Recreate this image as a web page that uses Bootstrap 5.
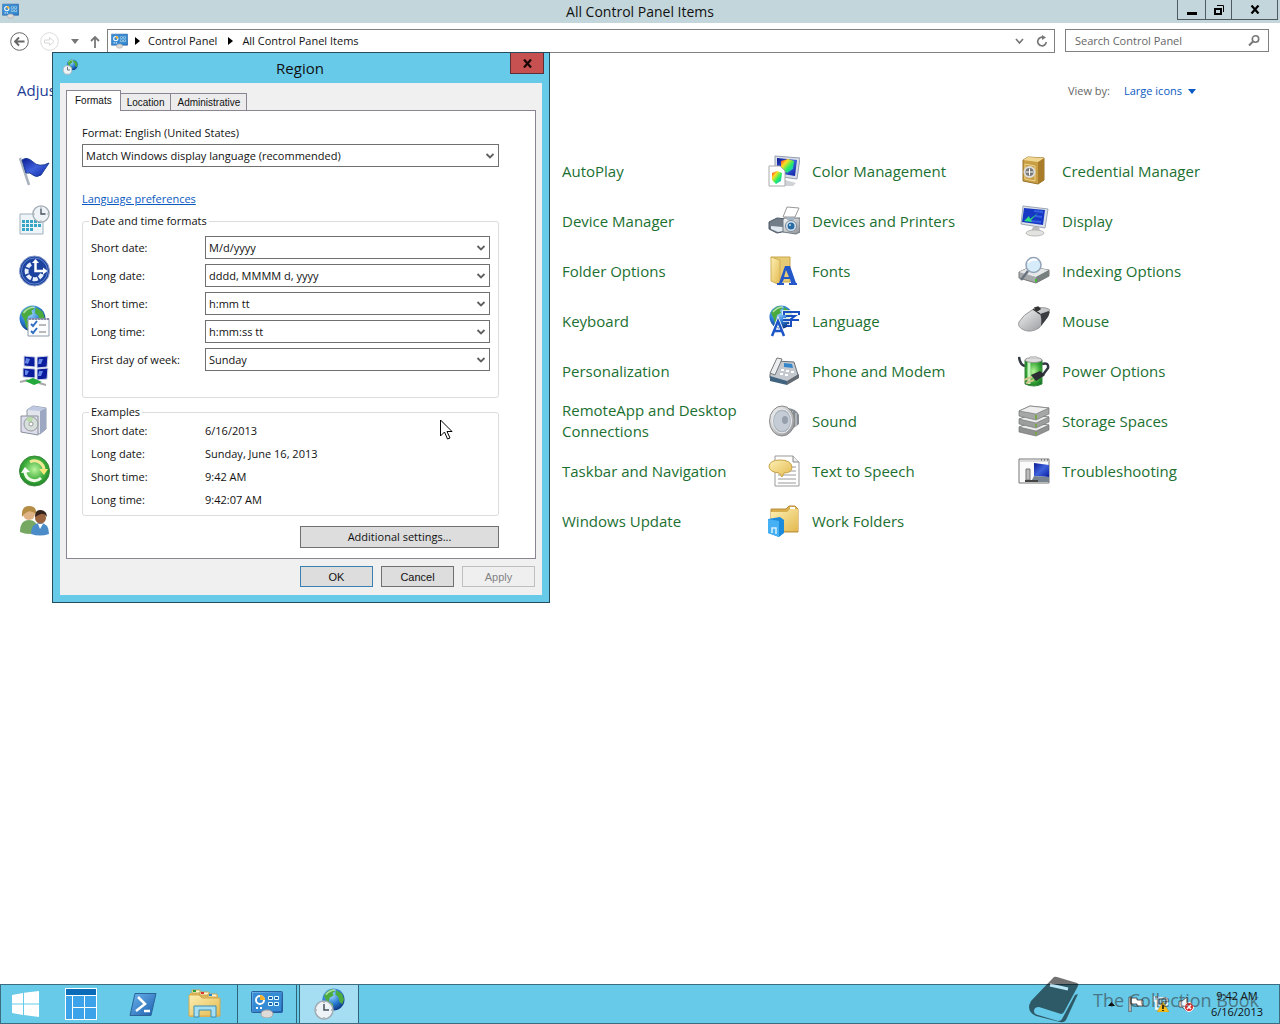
<!DOCTYPE html>
<html lang="en">
<head>
<meta charset="utf-8">
<meta name="viewport" content="width=device-width, initial-scale=1">
<title>All Control Panel Items</title>
<link href="https://cdn.jsdelivr.net/npm/bootstrap@5.3.0/dist/css/bootstrap.min.css" rel="stylesheet">
<style>
:root{--glass:#67cae9;--edge:#244c5c}
body{font-family:"Open Sans","Noto Sans",sans-serif;font-size:11px;line-height:16px;color:#111;background:#fff}
svg{flex:none;display:block}
button{font-family:inherit;color:inherit}
.titlebar{height:23px;background:#c3d6dc}
.titlebar h1{font-size:14px;line-height:23px}
.title-icon{left:2px;top:3px}
.winctl{top:0;right:2px;height:20px;border:1px solid #4d5a60;border-top:0}
.winctl button{background:none;border:0;padding:0;width:27px;display:grid;place-items:center}
.winctl button+button{border-left:1px solid #4d5a60;width:26px}
.winctl button:last-child{width:46px}
.navrow{padding:6px 11px 0 10px;gap:10px}
.navrow .plain{background:none;border:0;padding:0}
.histbtns{width:90px;height:24px;margin-right:-3px}
.address{height:24px;border:1px solid #808080;padding:0 6px 0 3px}
.address a,.address a:hover{color:#111}
.crumb-arrow{margin:0 8px 0 7px}
.crumb-arrow.next{margin:0 9px 0 11px}
.searchbox{width:204px;height:23px;border:1px solid #808080}
.searchbox input{font-size:11px;line-height:16px;padding:0 0 0 9px;color:#555}
.searchbox input::placeholder{color:#666;opacity:1}
.headrow{padding:27px 84px 0 17px;height:93px}
.headrow h2{font-size:15px;line-height:20px;color:#1d3c94}
.viewby{gap:14px;line-height:22px;color:#666}
.viewby button{color:#0a5ac2;gap:6px}
.items{grid-template-columns:repeat(auto-fill,250px);grid-auto-rows:50px;padding-left:18px}
.items li:nth-child(4n+2){grid-column:3}
.items a{font-size:15px;line-height:21px;color:#1c7032;gap:12px;height:50px;padding-right:20px}
.items .bare{padding-left:44px}
/* Region dialog */
.dlg{left:52px;top:52px;width:498px;background:var(--glass);border:1px solid var(--edge);padding:0 7px 7px}
.dlg-title{height:30px;padding-right:2px}
.dlg-title h2{font-size:15px;line-height:30px}
.dlg-icon{left:9px;top:6px}
.dlg-close{top:0;right:5px;width:34px;height:21px;background:#c75050;border:1px solid #5a3036;border-top:0;padding:0;display:grid;place-items:center}
.dlg-body{background:#f0f0f0;padding:7px 6px 8px}
.tabs .nav-link{font-family:"Liberation Sans",sans-serif;font-size:10px;line-height:17px;color:#111;background:#ececec;border:1px solid #8b8593;border-radius:0;border-bottom:0;padding:0 6px;height:17px;margin:0 0 0 -1px}
.tabs .nav-link.active{background:#fff;height:21px;line-height:18px;padding:0 8px;margin:0 0 -1px;z-index:2;position:relative}
.pane{background:#fff;border:1px solid #8b8593;padding:14px 36px 10px 15px}
.pane>label{margin-bottom:3px}
.pane>a{color:#0a5ac2}
.combo{--bs-form-select-bg-img:url("data:image/svg+xml,%3Csvg xmlns='http://www.w3.org/2000/svg' viewBox='0 0 10 8'%3E%3Cpath d='M1.500 2l3.500 3.500 3.500-3.500' fill='none' stroke='%23606060' stroke-width='1.800'/%3E%3C/svg%3E");font-size:11px;line-height:16px;height:23px;border:1px solid #707070;border-radius:0;padding:0 20px 0 3px;color:#111;background-color:#fff;background-size:10px 8px;background-position:right 3px center}
.group{border:1px solid #dcdcdc;border-radius:3px;padding:0 8px 4px;margin-top:7px}
.group legend{font-size:11px;line-height:14px;padding:0 2px;margin:0 0 0 -2px}
.pair{display:grid;grid-template-columns:114px 1fr;align-items:center}
.formats{padding-bottom:26px}
.formats .pair{margin-top:5px}
.formats legend+.pair{margin-top:8px}
.samples .pair{height:23px}
.wbtn{font-size:11px;line-height:14px;border:1px solid #707070;border-radius:0;background:#ddd;color:#111;padding:0;height:22px}
.wbtn.wide{width:199px;margin-top:10px}
.wbtn.ms{font-family:"Liberation Sans",sans-serif;width:73px;height:21px}
.wbtn.default{border-color:#3c7fb1}
.wbtn:disabled{background:#efefef;border-color:#bfbfbf;color:#838383;opacity:1}
.actions{margin-top:7px;padding-right:1px}
.pointer{left:440px;top:419px}
/* Taskbar */
.taskbar{height:40px;background:var(--glass);border:1px solid #3b6c7f;gap:2px}
.taskbar .tb{width:60px;height:38px;border:0;background:none;padding:0;display:grid;place-items:center}
.taskbar .start{width:48px}
.taskbar .run{border:solid #2f6478;border-width:0 1px;background:#70cdea}
.taskbar .on{background:#a5ddf3}
.tray{gap:9px;padding-right:16px}
.brand{right:21px;bottom:1px;font-size:18px;line-height:24px;color:#333;opacity:.55;gap:14px}
</style>
<script src="https://cdn.jsdelivr.net/npm/bootstrap@5.3.0/dist/js/bootstrap.bundle.min.js"></script>
</head>
<body class="d-flex flex-column min-vh-100 position-relative">
<svg width="0" height="0" class="position-absolute" aria-hidden="true">
<defs>
<linearGradient id="blu" x1="0" y1="0" x2="1" y2="1"><stop offset="0" stop-color="#6db4ec"/><stop offset="1" stop-color="#1b5fae"/></linearGradient>
<linearGradient id="navy" x1="0" y1="0" x2="1" y2="1"><stop offset="0" stop-color="#0a1a90"/><stop offset=".5" stop-color="#3f62dc"/><stop offset="1" stop-color="#0a1fa0"/></linearGradient>
<linearGradient id="gry" x1="0" y1="0" x2="1" y2="1"><stop offset="0" stop-color="#fafafa"/><stop offset="1" stop-color="#8a8d92"/></linearGradient>
<linearGradient id="yel" x1="0" y1="0" x2="1" y2="1"><stop offset="0" stop-color="#fdf0b4"/><stop offset="1" stop-color="#e3b94f"/></linearGradient>
<linearGradient id="rgb" x1="0" y1="0" x2="1" y2="1"><stop offset="0" stop-color="#f22"/><stop offset=".3" stop-color="#fd2"/><stop offset=".6" stop-color="#2e6"/><stop offset="1" stop-color="#29f"/></linearGradient>
<radialGradient id="sea" cx=".4" cy=".3" r=".8"><stop offset="0" stop-color="#a6dcff"/><stop offset=".5" stop-color="#2b7ed6"/><stop offset="1" stop-color="#06256e"/></radialGradient>
<radialGradient id="grn" cx=".5" cy=".45" r=".6"><stop offset="0" stop-color="#baf59c"/><stop offset=".6" stop-color="#3fae3c"/><stop offset="1" stop-color="#167a24"/></radialGradient>
<symbol id="globe" viewBox="0 0 24 24"><circle cx="12" cy="12" r="11.500" fill="url(#sea)"/><path d="M2 8Q5 2 11 1l3 2-3 2 1 3-4 2-1 4 4 2 1 3-3 4-3-4-1-5zM15 2l6 4 2 6-2 5-3-3-1-5-3-2z" fill="#4cab3e"/><path d="M4 7Q8 2 14 2" stroke="#d8f5d0" stroke-width="1.500" fill="none" opacity=".7"/></symbol>
<symbol id="clock" viewBox="0 0 20 20"><circle cx="10" cy="10" r="9" fill="#eef3f7" stroke="#a2acb4" stroke-width="1.500"/><path d="M10 4v6h5" stroke="#47515c" stroke-width="1.500" fill="none"/><path d="M10 2v1M10 17v1M2 10h1M17 10h1" stroke="#888"/></symbol>
<symbol id="region" viewBox="0 0 32 32"><use href="#globe" x="9" y="0" width="23" height="23"/><use href="#clock" x="1" y="12" width="20" height="20"/></symbol>
<symbol id="cpl" viewBox="0 0 32 27"><rect x=".5" y=".5" width="31" height="21" rx="1" fill="url(#blu)" stroke="#285f9c"/><rect x="2" y="2" width="28" height="18" fill="#358bd4"/><circle cx="9" cy="9" r="4" fill="none" stroke="#fff" stroke-width="2"/><path d="M9 9V4a5 5 0 0 1 5 5z" fill="#f6b12c"/><path d="M17.500 5.500h4v3h-4zM23.500 5.500h4v3h-4zM17.500 11.500h4v3h-4zM23.500 11.500h4v3h-4z" fill="#1d5ea8" stroke="#dff"/><path d="M5 17h2M9 17h2" stroke="#fff" stroke-width="2"/><ellipse cx="16" cy="23" rx="6" ry="4" fill="#dedad8" stroke="#a8a4a4"/></symbol>
</defs></svg>

<header class="titlebar position-relative text-center">
  <svg class="title-icon position-absolute" width="17" height="16"><use href="#cpl"/></svg>
  <h1 class="m-0 fw-normal">All Control Panel Items</h1>
  <div class="winctl position-absolute d-flex">
    <button aria-label="Minimize"><svg width="10" height="10"><path d="M0 7h10v3H0z"/></svg></button>
    <button aria-label="Restore"><svg width="10" height="10"><path d="M1 4h6v5H1z" fill="none" stroke="#000" stroke-width="2"/><path d="M3 .5h6.500V7" fill="none" stroke="#000"/></svg></button>
    <button aria-label="Close"><svg width="10" height="9"><path d="M1.500.500l7 8M8.500.500l-7 8" stroke="#000" stroke-width="2.200"/></svg></button>
  </div>
</header>

<nav class="navrow d-flex align-items-start" aria-label="Address">
  <div class="histbtns d-flex align-items-center">
    <button class="plain" aria-label="Back"><svg width="19" height="19"><circle cx="9.500" cy="9.500" r="8.800" fill="none" stroke="#666"/><path d="M14.500 9.500H5.500M9 5.500l-4 4 4 4" fill="none" stroke="#666" stroke-width="1.800"/></svg></button>
    <button class="plain ms-auto" aria-label="Forward"><svg width="19" height="19"><circle cx="9.500" cy="9.500" r="8.800" fill="none" stroke="#dcdcdc"/><path d="M4.500 8h5V5.500l4.500 4-4.500 4V11h-5z" fill="none" stroke="#d8d8d8"/></svg></button>
    <button class="plain ms-auto" aria-label="Recent locations"><svg width="8" height="5"><path d="M0 0h8L4 5z" fill="#777"/></svg></button>
    <button class="plain ms-auto" aria-label="Up"><svg width="10" height="13"><path d="M5 13V2M1 6l4-4 4 4" fill="none" stroke="#777" stroke-width="1.800"/></svg></button>
  </div>
  <div class="address d-flex align-items-center flex-grow-1">
    <svg width="17" height="16"><use href="#cpl"/></svg>
    <svg class="crumb-arrow" width="5" height="8"><path d="M0 0l5 4-5 4z"/></svg>
    <a class="text-decoration-none" href="#">Control Panel</a>
    <svg class="crumb-arrow next" width="5" height="8"><path d="M0 0l5 4-5 4z"/></svg>
    <a class="text-decoration-none" href="#">All Control Panel Items</a>
    <button class="plain ms-auto me-2" aria-label="Previous locations"><svg width="9" height="7"><path d="M1 1l3.500 4L8 1" fill="none" stroke="#777" stroke-width="1.700"/></svg></button>
    <button class="plain ms-1" aria-label="Refresh"><svg width="12" height="12"><path d="M7.500 2.500A4.300 4.300 0 1 0 10.300 7" fill="none" stroke="#777" stroke-width="1.700"/><path d="M6 0l4 2.500L6 5z" fill="#777"/></svg></button>
  </div>
  <label class="searchbox d-flex align-items-center pe-2">
    <input class="form-control border-0 shadow-none bg-transparent" type="search" placeholder="Search Control Panel" aria-label="Search Control Panel">
    <svg width="12" height="11"><circle cx="7.500" cy="4" r="3.200" fill="none" stroke="#777" stroke-width="1.600"/><path d="M5 6.500L1 10.500" stroke="#777" stroke-width="2"/></svg>
  </label>
</nav>

<main class="flex-grow-1">
  <div class="headrow d-flex justify-content-between">
    <h2 class="m-0 fw-normal">Adjust</h2>
    <div class="viewby d-flex align-items-start"><span>View by:</span>
      <button class="border-0 bg-transparent p-0 d-flex align-items-center">Large icons<svg width="8" height="5"><path d="M0 0h8L4 5z" fill="#0a5ac2"/></svg></button></div>
  </div>
  <ul class="items d-grid list-unstyled m-0">
    <li><a href="#" aria-label="Action Center" class="d-flex align-items-center text-decoration-none"><svg width="32" height="32"><path d="M2 3l9 27" stroke="#a9b2bd" stroke-width="2.500"/><path d="M4 5Q9 1 15 7t16 1l-4 6-4 6q-5 3-8 0T8 18z" fill="url(#navy)" stroke="#1c3d96"/></svg></a></li>
    <li><a href="#" class="bare d-flex align-items-center text-decoration-none">AutoPlay</a></li>
    <li><a href="#" class="d-flex align-items-center text-decoration-none"><svg width="32" height="32"><path d="M7 1l25 2-3 21-22-3z" fill="#d9dee6" stroke="#959eaf"/><path d="M9 3l20 2-2 16-18-3z" fill="url(#navy)"/><path d="M13 6l7-2 6 2-1 8-6 4-6-4z" fill="url(#rgb)"/><path d="M17 25l11 3-3 3H13z" fill="#cfd2d6"/><path d="M1 11h11l5 5v15H1z" fill="#fff" stroke="#aaa"/><path d="M4 18l5-2 5 2-1 8-5 3-4-4z" fill="url(#rgb)"/></svg>Color Management</a></li>
    <li><a href="#" class="d-flex align-items-center text-decoration-none"><svg width="32" height="32"><path d="M5 5l5-3 16 1v22l-6 4-15-3z" fill="#c99f45" stroke="#98742d"/><path d="M20 7l6-4v22l-6 4z" fill="#a87c28"/><path d="M5 5l5-3 16 1-6 4z" fill="#f0d791"/><path d="M7 9l10 2v15L7 24z" fill="none" stroke="#ecd28b"/><circle cx="11.500" cy="17" r="5" fill="#777" stroke="#ddd" stroke-width="2"/><path d="M8 17h7M11.500 13.500v7" stroke="#fff"/></svg>Credential Manager</a></li>

    <li><a href="#" aria-label="Date and Time" class="d-flex align-items-center text-decoration-none"><svg width="32" height="32"><path d="M2 9h23v20H2z" fill="#eef4f7" stroke="#9eb1bd"/><path d="M4 15h3v3H4zM8 15h3v3H8zM12 15h3v3h-3zM16 15h3v3h-3zM20 15h3v3h-3zM4 19h3v3H4zM8 19h3v3H8zM12 19h3v3h-3zM16 19h3v3h-3zM20 19h3v3h-3zM4 23h3v3H4zM8 23h3v3H8zM12 23h3v3h-3z" fill="#37a5c4"/><use href="#clock" x="14" y="0" width="18" height="18"/></svg></a></li>
    <li><a href="#" class="bare d-flex align-items-center text-decoration-none">Device Manager</a></li>
    <li><a href="#" class="d-flex align-items-center text-decoration-none"><svg width="32" height="32"><path d="M19 2l12 1-4 9H15z" fill="#fff" stroke="#999"/><path d="M1 17l8-4 10 1v12l-10 2-8-4z" fill="#737d88" stroke="#4c5865"/><path d="M3 21l12 1v4l-5 1-7-3z" fill="#e2e9f0"/><path d="M16 13h16v14l-4 2-13-2V15z" fill="url(#gry)" stroke="#6e7884"/><path d="M19 12h7v3h-7z" fill="#a4b2c1"/><circle cx="23" cy="21" r="5.500" fill="#dce6ee" stroke="#78899a"/><circle cx="23" cy="21" r="3.500" fill="#276ca5"/><circle cx="22" cy="20" r="1" fill="#bde"/></svg>Devices and Printers</a></li>
    <li><a href="#" class="d-flex align-items-center text-decoration-none"><svg width="32" height="32"><path d="M5 1l25 3-3 19-24-4z" fill="#dde2e8" stroke="#9ca7b5"/><path d="M6 3l21 2-2 15L4 17z" fill="#1638c4"/><path d="M16 6l9 1M17 11l7 1M13 16l10 1" stroke="#3560e0" stroke-width="2"/><path d="M20 8l-8 6-1-3-5 5 8 1-1-2z" fill="#2de07c"/><path d="M15 22h6l1 4h-9z" fill="#bbb"/><ellipse cx="17" cy="28" rx="9" ry="3" fill="#e2e2df" stroke="#bbb"/></svg>Display</a></li>

    <li><a href="#" aria-label="Ease of Access Center" class="d-flex align-items-center text-decoration-none"><svg width="32" height="32"><circle cx="16.500" cy="16" r="15" fill="#1c429f" stroke="#8c9fc8"/><circle cx="16.500" cy="16" r="13" fill="none" stroke="#7f9fe0" opacity=".7"/><path d="M13 9a8 8 0 1 0 11 10" fill="none" stroke="#e8f0fb" stroke-width="4" stroke-dasharray="5 1.500"/><path d="M17.500 7v9H27" stroke="#fff" stroke-width="2.500" fill="none"/><path d="M14 8l3.500-4L21 8zM25 12.500l4.500 3.500-4.500 3.500z" fill="#fff"/></svg></a></li>
    <li><a href="#" class="bare d-flex align-items-center text-decoration-none">Folder Options</a></li>
    <li><a href="#" class="d-flex align-items-center text-decoration-none"><svg width="32" height="32"><path d="M3 2h19v25H9z" fill="#e8cb75" stroke="#c9a64c"/><path d="M3 2l9 3v25l-9-4z" fill="url(#yel)" stroke="#cfae58"/><path fill-rule="evenodd" d="M17 11h5l6 17h1v2h-8v-2h2l-1-4h-6l-2 4h2v2h-7v-2h2zM18 15l-2 7h5z" fill="#2458c8"/></svg>Fonts</a></li>
    <li><a href="#" class="d-flex align-items-center text-decoration-none"><svg width="32" height="32"><path d="M1 17l11-5 19 3v6l-13 7-17-5z" fill="#a6a9ab" stroke="#777"/><path d="M1 17l11-5 19 3-13 7z" fill="#e5e7e8"/><path d="M18 22l13-7v6l-13 7z" fill="#77807e"/><path d="M17 24h2v3h-2z" fill="#4b3"/><circle cx="15.500" cy="10" r="7.500" fill="#d7ecfa" stroke="#92a3b5" stroke-width="1.500"/><path d="M10 16l-7 9" stroke="#69737e" stroke-width="2.500"/><path d="M10 8q3-5 9-3" stroke="#fff" stroke-width="2" fill="none"/></svg>Indexing Options</a></li>

    <li><a href="#" aria-label="Internet Options" class="d-flex align-items-center text-decoration-none"><svg width="32" height="32"><use href="#globe" x="1" y="0" width="27" height="27"/><path d="M10 14h21v17H10z" fill="#fcfdff" stroke="#8c9aaa"/><path d="M11 14h20" stroke="#88a" stroke-dasharray="2 1" stroke-width="2"/><path d="M13 19l2 2 4-5M13 26l2 2 4-5" stroke="#2e6fc2" stroke-width="2" fill="none"/><path d="M21 20h7M21 27h7" stroke="#777"/></svg></a></li>
    <li><a href="#" class="bare d-flex align-items-center text-decoration-none">Keyboard</a></li>
    <li><a href="#" class="d-flex align-items-center text-decoration-none"><svg width="32" height="32"><use href="#globe" x="1" y="0" width="24" height="24"/><path d="M4 31l6-15 6 15M6 26h8" fill="none" stroke="#fff" stroke-width="4"/><path d="M4 31l6-15 6 15M6 26h8" fill="none" stroke="#1c55c8" stroke-width="2.500"/><path d="M16 10V7h15v3M18 11h9l-4 3v7h-4M15 15h16" stroke="#fff" stroke-width="3.500" fill="none"/><path d="M16 10V7h15v3M18 11h9l-4 3v7h-4M15 15h16" stroke="#1a4fc0" stroke-width="2" fill="none"/></svg>Language</a></li>
    <li><a href="#" class="d-flex align-items-center text-decoration-none"><svg width="32" height="32"><path d="M14 5Q21 1 28 3t3 5q-3 7-10 15-8 5-15 2T1 17Q5 10 14 5z" fill="url(#gry)" stroke="#999"/><path d="M22 9l9-3q1 2-1 6l-7 9q1-8-1-12z" fill="#3c3d42"/><path d="M15 4l7 5M17 3l3-1 2 2-3 2z" stroke="#333" stroke-width="1.500" fill="#333"/></svg>Mouse</a></li>

    <li><a href="#" aria-label="Network and Sharing Center" class="d-flex align-items-center text-decoration-none"><svg width="32" height="32"><path d="M6 1l11 1v10L6 11zM19 2l11-1-1 11-10 1zM5 13l12 1v9L5 22zM19 14l11-1-1 11-10 1z" fill="#0b1d9c" stroke="#cfd6e8"/><path d="M8 3l4 1-2 5-3-1zM21 4h4l-2 5h-3zM7 15l4 1-2 4H7zM21 16h4l-2 5h-3z" fill="#6689e8"/><path d="M2 27l8-2M21 28l7 2" stroke="#aaa" stroke-width="2"/><path d="M7 26l8-3 9 4-8 3z" fill="#23a83c"/></svg></a></li>
    <li><a href="#" class="bare d-flex align-items-center text-decoration-none">Personalization</a></li>
    <li><a href="#" class="d-flex align-items-center text-decoration-none"><svg width="32" height="32"><path d="M2 19L9 6l17 1 4 13-11 7-17-4z" fill="#c4c9cf" stroke="#666f78"/><path d="M9 3l5 1-7 16-5-2z" fill="#eceff2" stroke="#777"/><path d="M16 8l8 1 1 4-9-1z" fill="#3585cb"/><path d="M13 15h3M18 16h3M23 17h3M12 19h3M17 20h3" stroke="#fff" stroke-width="2"/><path d="M2 21l17 5v4L2 26z" fill="#40647f"/><path d="M19 26l12-7v4l-12 7z" fill="#646b72"/></svg>Phone and Modem</a></li>
    <li><a href="#" class="d-flex align-items-center text-decoration-none"><svg width="32" height="32"><path d="M1 2q1 9 7 9M24 9q7-2 6 4l-6 8" stroke="#333943" stroke-width="2.500" fill="none"/><path d="M7 5h17v24q-8 4-17 0z" fill="url(#grn)" stroke="#3d8b40"/><path d="M11 7v22" stroke="#c5f5bd" stroke-width="3"/><ellipse cx="15.500" cy="5" rx="8.500" ry="2.500" fill="#ddd" stroke="#999"/><path d="M12 1h7v3h-7z" fill="#ccc"/><path d="M13 20l9-4 5 4-9 6z" fill="#2c2e34"/><path d="M14 22l-8 3M16 25l-8 3" stroke="#d7c38e" stroke-width="2"/></svg>Power Options</a></li>

    <li><a href="#" aria-label="Programs and Features" class="d-flex align-items-center text-decoration-none"><svg width="32" height="32"><path d="M9 5l6-4 13 2v21l-6 5-13-3z" fill="#e2e5ec" stroke="#8f98a8"/><path d="M22 6l6-3v21l-6 5z" fill="#9ca7c1"/><path d="M9 5l6-4 13 2-6 3z" fill="#bec8e0"/><path d="M3 11h17v19L3 27z" fill="#dde" stroke="#888f99"/><circle cx="13" cy="19" r="7" fill="#d6dfdb" stroke="#999"/><path d="M13 19l-5-5q4-4 7-1z" fill="#b7dba7"/><circle cx="13" cy="19" r="2" fill="#fff" stroke="#999"/></svg></a></li>
    <li><a href="#" class="bare d-flex align-items-center text-decoration-none">RemoteApp and Desktop Connections</a></li>
    <li><a href="#" class="d-flex align-items-center text-decoration-none"><svg width="32" height="32"><path d="M18 3q10 0 13 7v9l-12 9z" fill="#858b92"/><path d="M24 6l1 19M28 8v14" stroke="#ddd"/><ellipse cx="14" cy="16" rx="12.500" ry="15" fill="url(#gry)" stroke="#888"/><ellipse cx="14" cy="16" rx="9.500" ry="12" fill="#aeb6c0" stroke="#eee"/><ellipse cx="14" cy="16" rx="8" ry="10" fill="#c5ccd5"/><ellipse cx="17" cy="15" rx="3" ry="4" fill="#959fac"/></svg>Sound</a></li>
    <li><a href="#" class="d-flex align-items-center text-decoration-none"><svg width="32" height="32"><g stroke="#777" stroke-width=".7"><path d="M1 22l11-4 19 2v5l-13 6-17-4z" fill="#8f9291"/><path d="M1 22l11-4 19 2-13 6z" fill="#eee"/><path d="M1 14l11-4 19 2v5l-13 6-17-4z" fill="#9b9e9d"/><path d="M1 14l11-4 19 2-13 6z" fill="#eee"/><path d="M1 6l11-5 19 2v6l-13 6-17-4z" fill="#a4a7a6"/><path d="M1 6l11-5 19 2-13 6z" fill="#eee"/></g><path d="M17 10h2v4h-2zM17 19h2v3h-2zM17 27h2v3h-2z" fill="#7a4"/></svg>Storage Spaces</a></li>

    <li><a href="#" aria-label="Sync Center" class="d-flex align-items-center text-decoration-none"><svg width="32" height="32"><circle cx="16.500" cy="16" r="15" fill="url(#grn)" stroke="#3c8a3c"/><path d="M7 17a9.500 9.500 0 0 0 16 6" stroke="#f2fae9" stroke-width="3" fill="none"/><path d="M3 18l4-6 5 5z" fill="#fff"/><path d="M26 15A9.500 9.500 0 0 0 12 7" stroke="#f1e896" stroke-width="3" fill="none"/><path d="M21 14h9l-4 6z" fill="#f7e87c"/></svg></a></li>
    <li><a href="#" class="bare d-flex align-items-center text-decoration-none">Taskbar and Navigation</a></li>
    <li><a href="#" class="d-flex align-items-center text-decoration-none"><svg width="32" height="32"><path d="M7 1h18l6 6v24H7z" fill="#fff" stroke="#999"/><path d="M25 1v6h6" fill="#eee" stroke="#888"/><path d="M17 16h11M10 20h18M10 24h18M10 28h18M24 12h4" stroke="#999"/><path d="M12 5q11 0 12 7 0 6-8 6l-2 4-3-4Q1 17 1 11q1-6 11-6z" fill="url(#yel)" stroke="#c7a144"/></svg>Text to Speech</a></li>
    <li><a href="#" class="d-flex align-items-center text-decoration-none"><svg width="32" height="32"><path d="M1 4h30v24H1z" fill="#fafafa" stroke="#777"/><path d="M1 6h30" stroke="#bbb"/><path d="M23 5h1M26 5h1M29 5h1" stroke="#444"/><path d="M16 8l15 2v12l-15-1z" fill="url(#navy)"/><path d="M8 14h4v11H8z" fill="#bbb" stroke="#777"/><path d="M16 21l15 1v5H13z" fill="#788390"/><path d="M7 26h13" stroke="#444" stroke-width="2"/></svg>Troubleshooting</a></li>

    <li><a href="#" aria-label="User Accounts" class="d-flex align-items-center text-decoration-none"><svg width="32" height="32"><path d="M2 27q0-12 9-12t9 12q-9 4-18 0z" fill="#76a864"/><circle cx="11" cy="9" r="6" fill="#e0b384"/><path d="M4 12q-1-11 7-11t7 8q-5-4-9-2t-5 5z" fill="#b58d45"/><path d="M13 29q0-11 9-11t9 11q-9 3-18 0z" fill="#4b8cc8"/><circle cx="22.500" cy="13" r="5.500" fill="#9a6440"/><path d="M17 12q0-8 6-7t6 7q-3-4-6-3t-6 3z" fill="#33231c"/><path d="M20 19l2 5 3-5z" fill="#fff"/></svg></a></li>
    <li><a href="#" class="bare d-flex align-items-center text-decoration-none">Windows Update</a></li>
    <li><a href="#" class="d-flex align-items-center text-decoration-none"><svg width="32" height="32"><path d="M3 4h15l3-3h6l3 3v23H3z" fill="#d8ae4e" stroke="#b98e36"/><path d="M3 7h16l3-3h8v22H3z" fill="url(#yel)"/><path d="M22 2h5v2h-5z" fill="#fff"/><path d="M0 14l12-2 4 3v13l-5 4-11-4z" fill="#1d8bdc"/><path d="M0 14l11 2v16L0 28z" fill="#45b0f4"/><path d="M4 28v-5h4v6" fill="none" stroke="#d6f0ff" stroke-width="1.500"/></svg>Work Folders</a></li>
  </ul>
</main>

<footer class="taskbar d-flex">
  <button class="tb start" aria-label="Start"><svg width="27" height="26"><path d="M0 4l11-2v10.500H0zM12 1.800L27 0v12.500H12zM0 13.500h11V24L0 22zM12 13.500h15V26l-15-2z" fill="#fff"/></svg></button>
  <button class="tb" aria-label="Server Manager"><svg width="32" height="32"><path d="M0 0h32v32H0z" fill="#fff"/><path d="M1 1h30v6H1z" fill="#0a6cb8"/><path d="M1 8h6v23H1zM8 8h11v11H8zM20 8h11v11H20zM8 20h11v11H8zM20 20h11v11H20z" fill="#3ca2ea"/></svg></button>
  <button class="tb" aria-label="PowerShell"><svg width="28" height="23"><path d="M6 .500h21L22 22.500H1z" fill="url(#blu)" stroke="#2a6499"/><path d="M9 4l7 7-9 7M15 18h6" fill="none" stroke="#fff" stroke-width="2.500"/></svg></button>
  <button class="tb" aria-label="File Explorer"><svg width="34" height="30"><path d="M2 4h10l2 2h16v22H2z" fill="#e0b85a"/><path d="M4 1h8v3H4zM12 3h9v3h-9zM20 5h9v3h-9z" fill="#fff7d2" stroke="#c9a552"/><path d="M5 1h3v2H5z" fill="#2a9d35"/><path d="M13 3h3v2h-3z" fill="#d33"/><path d="M21 5h3v2h-3z" fill="#28c"/><path d="M1 6h10l3 3h18v18H1z" fill="url(#yel)" stroke="#d2aa50"/><path d="M6 28V17h22v11h-5v-7H11v7z" fill="#a6dff3" stroke="#3a8fb5"/></svg></button>
  <button class="tb run" aria-label="Control Panel"><svg width="32" height="27"><use href="#cpl"/></svg></button>
  <button class="tb run on" aria-label="Region"><svg width="32" height="32"><use href="#region"/></svg></button>
  <div class="tray ms-auto d-flex align-items-center">
    <button class="border-0 bg-transparent p-0 me-1" aria-label="Show hidden icons"><svg width="7" height="4"><path d="M3.500 0L7 4H0z"/></svg></button>
    <svg width="16" height="16"><path d="M1 1h2v15H1zM3 2h6v2h6v6H9V8H3z" fill="#fff" stroke="#333" stroke-width=".8"/></svg>
    <svg width="16" height="16"><path d="M1 1h4v4H1zM5 2h9v7H5zM3 5v8h4" fill="#8bd5ee" stroke="#fff" stroke-width="1.500"/><path d="M2 1h3M6 3h7v5H6z" fill="none" stroke="#234"/><path d="M10 6l6 10H4z" fill="#fcbf1c" stroke="#c98d00" stroke-width=".5"/><path d="M10 9v4M10 14v1" stroke="#000" stroke-width="1.500"/></svg>
    <svg width="16" height="16"><path d="M1 5h3l5-4v14l-5-4H1z" fill="#eef8fc" stroke="#333" stroke-width=".8"/><circle cx="11" cy="11" r="4.500" fill="#d92b2b" stroke="#fff"/><path d="M9 9l4 4M13 9l-4 4" stroke="#fff" stroke-width="1.500"/></svg>
    <time class="text-center ms-2">9:42 AM<br>6/16/2013</time>
  </div>
</footer>

<section class="dlg position-absolute" role="dialog" aria-labelledby="dlgname">
  <div class="dlg-title text-center">
    <svg class="dlg-icon position-absolute" width="16" height="16"><use href="#region"/></svg>
    <h2 class="m-0 fw-normal" id="dlgname">Region</h2>
    <button class="dlg-close position-absolute" aria-label="Close"><svg width="9" height="9"><path d="M1 .500l7 8M8 .500l-7 8" stroke="#1a0808" stroke-width="2.200"/></svg></button>
  </div>
  <div class="dlg-body">
    <div class="tabs nav align-items-end" role="tablist">
      <button class="nav-link active" role="tab">Formats</button>
      <button class="nav-link" role="tab">Location</button>
      <button class="nav-link" role="tab">Administrative</button>
    </div>
    <form class="pane">
      <label class="d-block" for="fmt">Format: English (United States)</label>
      <select class="form-select combo" id="fmt"><option>Match Windows display language (recommended)</option></select>
      <a class="d-block mt-4" href="#">Language preferences</a>
      <fieldset class="group formats">
        <legend class="float-none w-auto">Date and time formats</legend>
        <div class="pair"><label for="sd">Short date:</label><select class="form-select combo" id="sd"><option>M/d/yyyy</option></select></div>
        <div class="pair"><label for="ld">Long date:</label><select class="form-select combo" id="ld"><option>dddd, MMMM d, yyyy</option></select></div>
        <div class="pair"><label for="st">Short time:</label><select class="form-select combo" id="st"><option>h:mm tt</option></select></div>
        <div class="pair"><label for="lt">Long time:</label><select class="form-select combo" id="lt"><option>h:mm:ss tt</option></select></div>
        <div class="pair"><label for="fd">First day of week:</label><select class="form-select combo" id="fd"><option>Sunday</option></select></div>
      </fieldset>
      <fieldset class="group samples">
        <legend class="float-none w-auto">Examples</legend>
        <div class="pair"><span>Short date:</span><span>6/16/2013</span></div>
        <div class="pair"><span>Long date:</span><span>Sunday, June 16, 2013</span></div>
        <div class="pair"><span>Short time:</span><span>9:42 AM</span></div>
        <div class="pair"><span>Long time:</span><span>9:42:07 AM</span></div>
      </fieldset>
      <div class="text-end"><button type="button" class="btn wbtn wide">Additional settings...</button></div>
    </form>
    <div class="actions d-flex justify-content-end gap-2">
      <button class="btn wbtn ms default">OK</button>
      <button class="btn wbtn ms">Cancel</button>
      <button class="btn wbtn ms" disabled>Apply</button>
    </div>
  </div>
</section>

<svg class="pointer position-absolute" width="13" height="21"><path d="M.500 1v16l4-4 3 7 2.500-1-3-6.500H12z" fill="#fff" stroke="#000"/></svg>
<div class="brand position-absolute d-flex align-items-center">
  <svg width="51" height="47"><path d="M25 2q1-2 4-1l20 6q2 1 1 3L36 36q-1 2-3 2L11 31q-5 0-5 4 0 3 4 4l20 6q3 0 4-2l13-24 3-1-12 26q-2 3-6 2L8 40q-7-3-7-9 0-2 2-6z"/><path d="M22 9l18 4" stroke="#fff" stroke-width="3"/></svg>
  <span>The Collection Book</span>
</div>
</body>
</html>
